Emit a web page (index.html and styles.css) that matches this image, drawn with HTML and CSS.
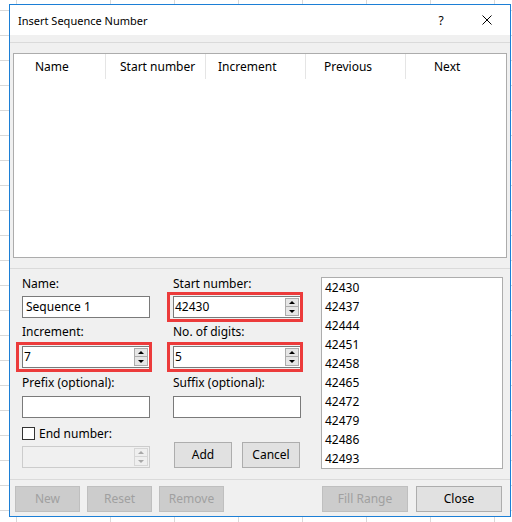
FILE: index.html
```html
<!DOCTYPE html>
<html lang="en">
<head>
  <meta charset="UTF-8">
  <title>Insert Sequence Number</title>
  <link rel="stylesheet" href="styles.css">
</head>
<body>

  <div class="dialog">
    <div class="titlebar">
      <div class="title">Insert Sequence Number</div>
      <div class="cap-btn">?</div>
      <div class="cap-btn">
        <svg width="10" height="10" viewBox="0 0 10 10">
          <path d="M0.5 0.5 L9.5 9.5 M9.5 0.5 L0.5 9.5" stroke="#000" stroke-width="1" fill="none"/>
        </svg>
      </div>
    </div>

    <div class="top-pane">
      <div class="seq-list">
        <div class="seq-head">
          <div class="col col-name">Name</div>
          <div class="col col-start">Start number</div>
          <div class="col col-inc">Increment</div>
          <div class="col col-prev">Previous</div>
          <div class="col col-next">Next</div>
        </div>
      </div>
    </div>

    <div class="edit-pane">
      <div class="field-col">
        <div class="lbl">Name:</div>
        <div class="box text">Sequence 1</div>

        <div class="lbl gap-lbl">Increment:</div>
        <div class="mark gap-box">
          <div class="box num">
            <span class="val">7</span>
            <span class="spinner"><span class="up"></span><span class="down"></span></span>
          </div>
        </div>

        <div class="lbl gap-lbl2">Prefix (optional):</div>
        <div class="box text gap-box2"></div>

        <div class="check-row">
          <span class="checkbox"></span>
          <span>End number:</span>
        </div>
        <div class="box num disabled end-box">
          <span class="val"></span>
          <span class="spinner"><span class="up"></span><span class="down"></span></span>
        </div>
      </div>

      <div class="field-col mid">
        <div class="lbl">Start number:</div>
        <div class="mark">
          <div class="box num">
            <span class="val">42430</span>
            <span class="spinner"><span class="up"></span><span class="down"></span></span>
          </div>
        </div>

        <div class="lbl gap-lbl">No. of digits:</div>
        <div class="mark gap-box">
          <div class="box num">
            <span class="val">5</span>
            <span class="spinner"><span class="up"></span><span class="down"></span></span>
          </div>
        </div>

        <div class="lbl gap-lbl2">Suffix (optional):</div>
        <div class="box text gap-box2"></div>

        <div class="small-btns">
          <div class="btn">Add</div>
          <div class="btn">Cancel</div>
        </div>
      </div>

      <div class="preview">
        <div>42430</div>
        <div>42437</div>
        <div>42444</div>
        <div>42451</div>
        <div>42458</div>
        <div>42465</div>
        <div>42472</div>
        <div>42479</div>
        <div>42486</div>
        <div>42493</div>
      </div>
    </div>

    <div class="button-bar">
      <div class="btn off w65">New</div>
      <div class="btn off w65">Reset</div>
      <div class="btn off w65">Remove</div>
      <div class="btn off w86 push">Fill Range</div>
      <div class="btn w86">Close</div>
    </div>
  </div>

</body>
</html>
```

FILE: styles.css
```css
* {
  box-sizing: border-box;
}

html, body {
  margin: 0;
  padding: 0;
}

/* spreadsheet grid behind the dialog */
body {
  width: 512px;
  height: 522px;
  overflow: hidden;
  font-family: "Noto Sans", "Open Sans", sans-serif;
  font-size: 12px;
  color: #000;
  background-color: #fff;
  background-image:
    linear-gradient(to bottom, #d9d9d9 1px, transparent 1px),
    linear-gradient(90deg, transparent 16px, #d9d9d9 16px, #d9d9d9 17px, #fff 17px, #fff 110px, transparent 110px),
    linear-gradient(90deg, #d9d9d9 1px, transparent 1px);
  background-size: 100% 25px, 100% 100%, 64px 100%;
  background-position: 0 10px, 0 0, 46px 0;
  background-repeat: repeat, no-repeat, repeat;
}

.dialog {
  margin: 4px 0 0 9px;
  width: 502px;
  height: 513px;
  border: 1px solid #1c7fd6;
  background: #f0f0f0;
  display: flex;
  flex-direction: column;
}

.titlebar {
  height: 30px;
  background: #fff;
  display: flex;
  align-items: center;
  padding-left: 8px;
}

.title {
  flex: 1;
  font-size: 11px;
  line-height: 15px;
}

.cap-btn {
  width: 46px;
  height: 30px;
  display: flex;
  align-items: center;
  justify-content: center;
  font-size: 12px;
}

.top-pane {
  margin-top: 7px;
  height: 227px;
  border-top: 1px solid #dadada;
  border-bottom: 1px solid #dadada;
  padding: 10px 3px;
}

.seq-list {
  height: 205px;
  border: 1px solid #acacac;
  background: #fff;
}

.seq-head {
  display: flex;
  height: 25px;
}

.col {
  width: 100px;
  height: 25px;
  line-height: 25px;
  border-right: 1px solid #e5e5e5;
  white-space: nowrap;
}

.col-name  { width: 92px; padding-left: 21px; }
.col-start { padding-left: 14px; }
.col-inc   { padding-left: 12px; }
.col-prev  { padding-left: 18px; }
.col-next  { padding-left: 28px; border-right: none; }

.edit-pane {
  height: 211px;
  border-bottom: 1px solid #dadada;
  padding: 7px 7px 0 12px;
  display: flex;
  align-items: flex-start;
}

.field-col {
  width: 128px;
  display: flex;
  flex-direction: column;
}

.field-col.mid {
  margin-left: 23px;
}

.lbl {
  height: 15px;
  line-height: 15px;
  white-space: nowrap;
  margin-bottom: 5px;
}

.gap-lbl  { margin-top: 6px; margin-bottom: 7px; }
.gap-lbl2 { margin-top: 7px; margin-bottom: 6px; }

.box {
  height: 22px;
  border: 1px solid #7a7a7a;
  background: #fff;
  line-height: 18px;
  padding-top: 1px;
}

.box.text {
  padding-left: 3px;
}

.box.num {
  display: flex;
  padding-left: 1px;
  padding-top: 0;
}

.box.num .val {
  flex: 1;
  padding-top: 1px;
}

.spinner {
  width: 14px;
  margin: 1px 1px 0 0;
  display: flex;
  flex-direction: column;
}

.spinner .up,
.spinner .down {
  height: 9px;
  border: 1px solid #acacac;
  background: #e6e6e6;
  display: flex;
  align-items: center;
  justify-content: center;
}

.spinner .down {
  border-top: none;
}

.spinner .up::after {
  content: "";
  border-left: 3px solid transparent;
  border-right: 3px solid transparent;
  border-bottom: 3px solid #000;
}

.spinner .down::after {
  content: "";
  border-left: 3px solid transparent;
  border-right: 3px solid transparent;
  border-top: 3px solid #000;
}

.box.disabled {
  border-color: #cccccc;
  background: #f0f0f0;
}

.box.disabled .spinner .up,
.box.disabled .spinner .down {
  border-color: #d6d6d6;
  background: #efefef;
}

.box.disabled .spinner .up::after   { border-bottom-color: #a8a8a8; }
.box.disabled .spinner .down::after { border-top-color: #a8a8a8; }

/* red highlight drawn round the edited fields */
.mark {
  position: relative;
}

.mark::after {
  content: "";
  position: absolute;
  left: -6px;
  top: -4px;
  right: -2px;
  bottom: -4px;
  border: 3px solid #ec3b3b;
  pointer-events: none;
}

.check-row {
  margin-top: 9px;
  height: 13px;
  line-height: 13px;
  display: flex;
  align-items: flex-start;
  white-space: nowrap;
}

.checkbox {
  width: 13px;
  height: 13px;
  border: 1px solid #333;
  background: #fff;
  margin-right: 4px;
}

.end-box {
  margin-top: 6px;
}

.small-btns {
  margin: 24px 0 0 1px;
  display: flex;
  gap: 10px;
}

.small-btns .btn {
  width: 58px;
}

.btn {
  height: 26px;
  line-height: 24px;
  text-align: center;
  background: #e1e1e1;
  border: 1px solid #adadad;
  white-space: nowrap;
}

.btn.off {
  background: #cccccc;
  border-color: #bfbfbf;
  color: #a0a0a0;
}

.preview {
  width: 182px;
  height: 192px;
  margin: 1px 0 0 20px;
  border: 1px solid #adadad;
  background: #fff;
  padding-left: 3px;
  line-height: 19px;
  overflow: hidden;
}

.button-bar {
  flex: 1;
  display: flex;
  gap: 7px;
  padding: 6px 8px 0 5px;
}

.w65 { width: 65px; }
.w86 { width: 86px; }

.push {
  margin-left: auto;
  margin-right: 1px;
}
```
